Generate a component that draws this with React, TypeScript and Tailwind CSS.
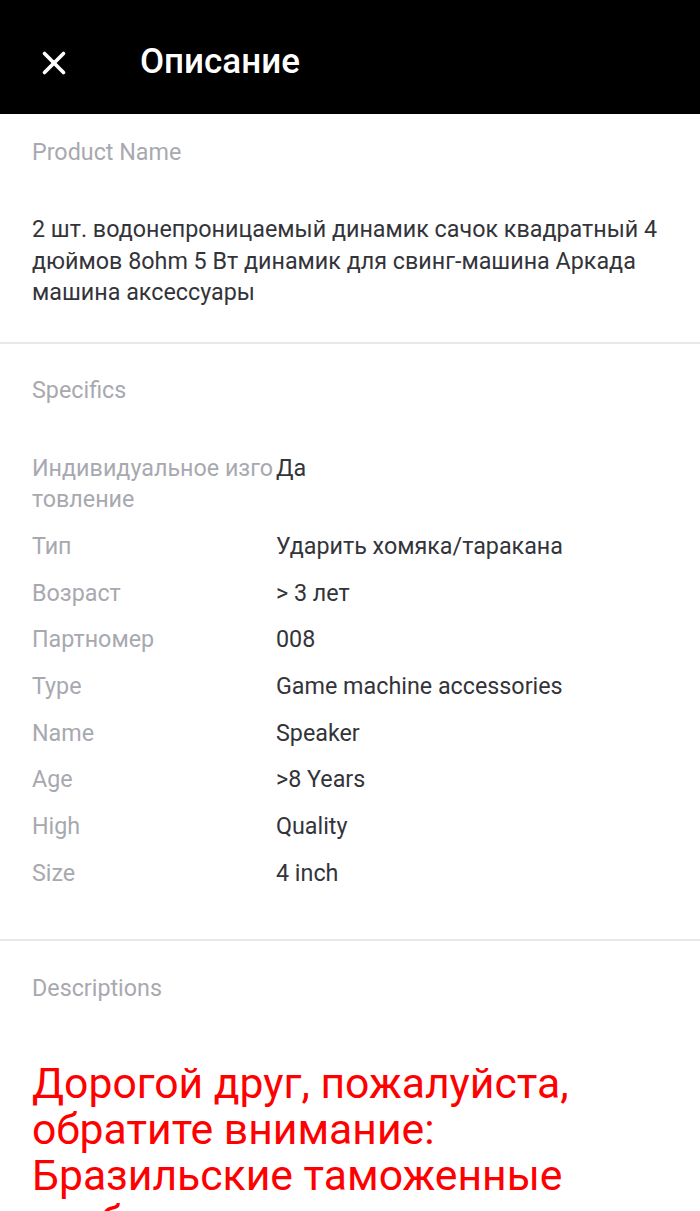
import { X } from "lucide-react";

const specs: [string, string][] = [
  ["Индивидуальное изготовление", "Да"],
  ["Тип", "Ударить хомяка/таракана"],
  ["Возраст", "> 3 лет"],
  ["Партномер", "008"],
  ["Type", "Game machine accessories"],
  ["Name", "Speaker"],
  ["Age", ">8 Years"],
  ["High", "Quality"],
  ["Size", "4 inch"],
];

export default function App() {
  return (
    <div className="min-h-[1211px] bg-white font-['Roboto','Noto_Sans',sans-serif]">
      <header className="flex h-[114px] items-center bg-black pt-[11px] text-white">
        <div className="flex w-[140px] pl-[35px]">
          <X size={38} strokeWidth={2.3} />
        </div>
        <h1 className="text-[35px] font-medium">Описание</h1>
      </header>

      <section className="border-b-2 border-[#e8e8ea] px-[32px] pb-[33px] pt-[22px]">
        <h2 className="text-[23.3px] leading-[32px] text-[#a8a9b0]">Product Name</h2>
        <p className="mt-[46px] text-[23.3px] leading-[31.5px] text-[#33343a]">
          2 шт. водонепроницаемый динамик сачок квадратный 4 дюймов 8ohm 5 Вт динамик для свинг-машина Аркада машина аксессуары
        </p>
      </section>

      <section className="border-b-2 border-[#e8e8ea] px-[32px] pb-[49px] pt-[30px]">
        <h2 className="text-[23.3px] leading-[32px] text-[#a8a9b0]">Specifics</h2>
        <div className="mt-[47px] flex flex-col gap-[15px]">
          {specs.map(([k, v]) => (
            <div key={k} className="flex text-[23.3px] leading-[31.7px]">
              <div className="w-[244px] shrink-0 break-all text-[#a8a9b0]">{k}</div>
              <div className="text-[#33343a]">{v}</div>
            </div>
          ))}
        </div>
      </section>

      <section className="px-[32px] pt-[31px]">
        <h2 className="text-[23.3px] leading-[32px] text-[#a8a9b0]">Descriptions</h2>
        <p className="mt-[56px] text-[42.7px] leading-[46px] text-[#ff0000]">
          Дорогой друг, пожалуйста, обратите внимание: Бразильские таможенные требования
        </p>
      </section>
    </div>
  );
}
